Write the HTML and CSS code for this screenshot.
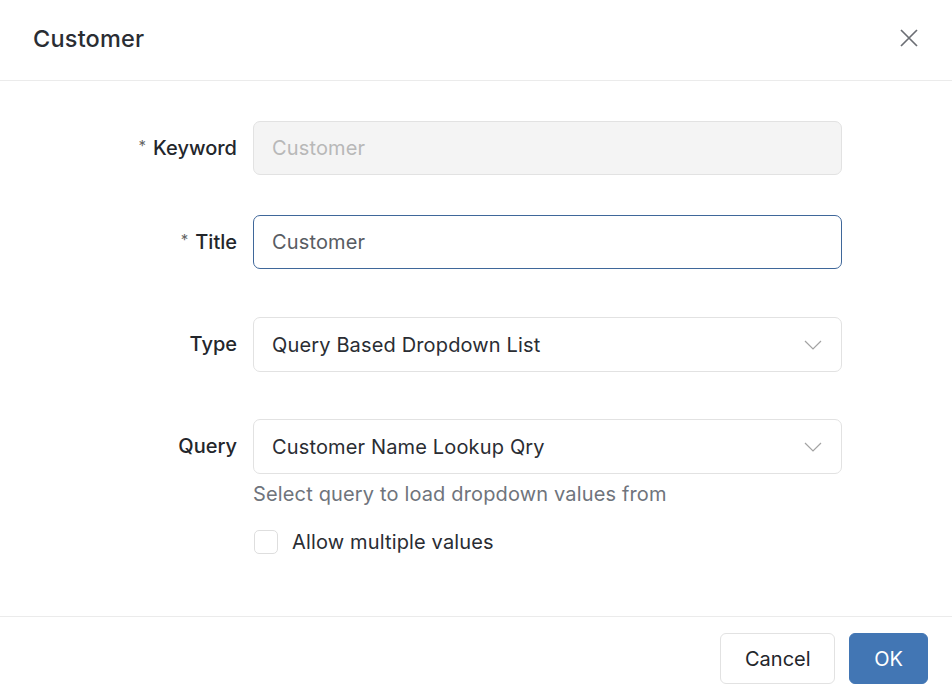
FILE: index.html
```html
<!DOCTYPE html>
<html lang="en">
<head>
<meta charset="utf-8">
<title>Customer</title>
<link rel="stylesheet" href="styles.css">
</head>
<body>
<div class="modal">
  <header class="modal-header">
    <h1 class="modal-title">Customer</h1>
    <button class="close" aria-label="Close">
      <svg width="18" height="18" viewBox="0 0 18 18"><path d="M1 1 L17 17 M17 1 L1 17" stroke="#6b6e74" stroke-width="1.7" fill="none"/></svg>
    </button>
  </header>
  <div class="modal-body">
    <div class="row row-keyword">
      <label class="label"><span class="req">*</span>Keyword</label>
      <div class="field"><div class="input input-disabled">Customer</div></div>
    </div>
    <div class="row row-title">
      <label class="label"><span class="req">*</span>Title</label>
      <div class="field"><div class="input input-focus">Customer</div></div>
    </div>
    <div class="row row-type">
      <label class="label">Type</label>
      <div class="field"><div class="input select"><span>Query Based Dropdown List</span>
        <svg class="chev" width="18" height="10" viewBox="0 0 18 10"><path d="M1 1 L9 9 L17 1" stroke="#a3a3a3" stroke-width="1.2" fill="none"/></svg></div></div>
    </div>
    <div class="row row-query">
      <label class="label">Query</label>
      <div class="field">
        <div class="input select"><span>Customer Name Lookup Qry</span>
          <svg class="chev" width="18" height="10" viewBox="0 0 18 10"><path d="M1 1 L9 9 L17 1" stroke="#a3a3a3" stroke-width="1.2" fill="none"/></svg></div>
        <div class="help">Select query to load dropdown values from</div>
        <label class="check"><span class="box"></span>Allow multiple values</label>
      </div>
    </div>
  </div>
  <footer class="modal-footer">
    <button class="btn btn-default">Cancel</button>
    <button class="btn btn-primary">OK</button>
  </footer>
</div>
</body>
</html>
```

FILE: styles.css
```css
* { box-sizing: border-box; }
html, body { margin: 0; padding: 0; background: #fff; }
body {
  font-family: Inter, "Noto Sans", "Liberation Sans", sans-serif;
  color: #1f2329;
  width: 952px;
  height: 698px;
  overflow: hidden;
  letter-spacing: 0.15px;
}
.modal { width: 952px; }
.modal-header {
  height: 81px;
  border-bottom: 1px solid #ebebeb;
  display: flex;
  align-items: center;
  justify-content: space-between;
  padding: 0 34px 4px 33px;
}
.modal-title {
  margin: 0;
  font-size: 23.5px;
  font-weight: 500;
  color: #2a2d33;
  letter-spacing: 0.2px;
}
.close {
  border: 0;
  background: none;
  padding: 0;
  display: flex;
  cursor: pointer;
}
.modal-body {
  padding: 40px 110px 62px 0;
}
.row {
  display: grid;
  grid-template-columns: 237px 1fr;
  column-gap: 16px;
  align-items: start;
}
.row-title { margin-top: 40px; }
.row-type { margin-top: 48px; }
.row-query { margin-top: 47px; }
.label {
  height: 54px;
  display: flex;
  align-items: center;
  justify-content: flex-end;
  font-size: 20px;
  font-weight: 500;
  color: #23262b;
  letter-spacing: 0;
}
.req {
  font-size: 15px;
  font-weight: 400;
  color: #666;
  margin-right: 7px;
  position: relative;
  top: -3px;
}
.input {
  height: 54px;
  border: 1px solid #e2e2e2;
  border-radius: 7px;
  display: flex;
  align-items: center;
  padding: 0 18px;
  font-size: 20px;
  color: #2a2d33;
  background: #fff;
}
.input-disabled {
  background: #f4f4f4;
  color: #b8b8b8;
}
.input-focus {
  border-color: #3f679a;
  color: #585c63;
}
.select {
  justify-content: space-between;
  height: 55px;
}
.chev { margin-right: 1px; }
.help {
  margin-top: 6px;
  font-size: 20px;
  line-height: 28px;
  color: #6f747c;
}
.check {
  margin-top: 22px;
  display: flex;
  align-items: center;
  font-size: 20px;
  color: #2a2d33;
}
.box {
  width: 24px;
  height: 24px;
  border: 1px solid #dedede;
  border-radius: 5px;
  margin: 0 14px 0 1px;
}
.modal-footer {
  border-top: 1px solid #ebebeb;
  display: flex;
  justify-content: flex-end;
  gap: 14px;
  padding: 16px 24px 0 0;
}
.btn {
  height: 51px;
  font-family: inherit;
  font-size: 20px;
  border-radius: 6px;
  padding: 0 24px;
  cursor: pointer;
}
.btn-default {
  width: 115px;
  background: #fff;
  border: 1px solid #e2e2e2;
  color: #23262b;
}
.btn-primary {
  width: 79px;
  background: #4276b4;
  border: 1px solid #4276b4;
  color: #fff;
}
```
